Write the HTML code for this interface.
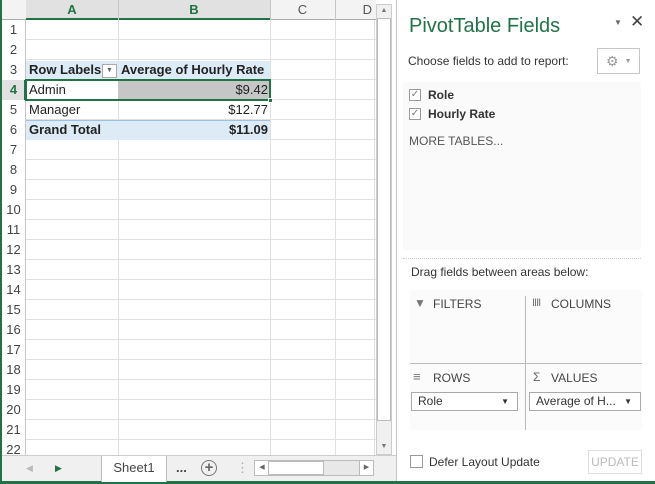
<!DOCTYPE html><html><head><style>
*{margin:0;padding:0;box-sizing:border-box}
body{width:655px;height:484px;position:relative;overflow:hidden;background:#fff;font-family:"Liberation Sans",Arial,sans-serif;font-size:13px;color:#222}
.a{position:absolute}
.rh{position:absolute;left:1px;width:25px;text-align:center;color:#444;font-size:13px;line-height:20px}
.hl{position:absolute;left:26px;width:350px;height:1px;background:#e0e0e0}
.vl{position:absolute;top:20px;height:435px;width:1px;background:#e0e0e0}
.t{position:absolute;line-height:20px;font-size:13px}
</style></head><body>
<div class="a" style="left:0;top:0;width:2px;height:484px;background:#217346"></div>
<div class="a" style="left:0;top:481px;width:655px;height:3px;background:#217346"></div>
<div class="a" style="left:2px;top:0;width:374px;height:20px;background:#f3f3f3;border-bottom:1px solid #ababab"></div>
<div class="a" style="left:26px;top:0;width:244px;height:20px;background:#e1e1e1;border-bottom:2px solid #217346"></div>
<div class="a" style="left:118px;top:0;width:1px;height:20px;background:#c6c6c6"></div>
<div class="a" style="left:270px;top:0;width:1px;height:20px;background:#c6c6c6"></div>
<div class="a" style="left:335px;top:0;width:1px;height:20px;background:#c6c6c6"></div>
<div class="t" style="left:26px;width:92px;top:0;text-align:center;color:#217346;font-weight:bold">A</div>
<div class="t" style="left:118px;width:152px;top:0;text-align:center;color:#217346;font-weight:bold">B</div>
<div class="t" style="left:270px;width:65px;top:0;text-align:center;color:#555">C</div>
<div class="t" style="left:335px;width:40px;top:0;text-align:right;padding-right:3px;color:#555">D</div>
<div class="a" style="left:2px;top:20px;width:24px;height:435px;background:#fff;border-right:1px solid #c6c6c6"></div>
<div class="a" style="left:2px;top:80px;width:24px;height:20px;background:#e1e1e1;border-right:2px solid #217346"></div>
<div id="rows"></div>
<div class="vl" style="left:118px"></div><div class="vl" style="left:270px"></div><div class="vl" style="left:335px"></div><div class="vl" style="left:374px"></div>
<div class="a" style="left:26px;top:61px;width:244px;height:19px;background:#ddebf7"></div>
<div class="a" style="left:26px;top:121px;width:244px;height:19px;background:#ddebf7"></div>
<div class="a" style="left:26px;top:79px;width:244px;height:1px;background:#9bc2e6"></div>
<div class="a" style="left:26px;top:120px;width:244px;height:1px;background:#9bc2e6"></div>
<div class="a" style="left:118px;top:81px;width:151px;height:18px;background:#c6c6c6"></div>
<div class="a" style="left:25px;top:79px;width:246px;height:22px;border:2px solid #217346"></div>
<div class="a" style="left:268px;top:98px;width:5px;height:5px;background:#217346;border:1px solid #fff"></div>
<div class="t" style="left:29px;top:60px;font-weight:bold">Row Labels</div>
<div class="a" style="left:102px;top:64px;width:15px;height:14px;border:1px solid #aaa;background:#fff;font-size:7px;color:#666;text-align:center;line-height:12px">▼</div>
<div class="t" style="left:121px;top:60px;font-weight:bold">Average of Hourly Rate</div>
<div class="t" style="left:29px;top:80px">Admin</div>
<div class="t" style="left:118px;width:150px;top:80px;text-align:right">$9.42</div>
<div class="t" style="left:29px;top:100px">Manager</div>
<div class="t" style="left:118px;width:150px;top:100px;text-align:right">$12.77</div>
<div class="t" style="left:29px;top:120px;font-weight:bold">Grand Total</div>
<div class="t" style="left:118px;width:150px;top:120px;text-align:right;font-weight:bold">$11.09</div>
<div class="a" style="left:376px;top:4px;width:16px;height:451px;background:#f0f0f0;border:1px solid #ccc"></div>
<div class="a" style="left:377px;top:18px;width:14px;height:403px;background:#fff;border:1px solid #bbb"></div>
<div class="a" style="left:377px;top:5px;width:14px;height:12px;font-size:7px;color:#777;text-align:center;line-height:12px">▲</div>
<div class="a" style="left:377px;top:441px;width:14px;height:12px;font-size:7px;color:#777;text-align:center;line-height:12px">▼</div>
<div class="a" style="left:2px;top:455px;width:394px;height:26px;background:#f0f0f0;border-top:1px solid #ccc"></div>
<div class="t" style="left:26px;top:458px;color:#bbb;font-size:9px">◀</div>
<div class="t" style="left:55px;top:458px;color:#217346;font-size:9px">▶</div>
<div class="a" style="left:101px;top:456px;width:66px;height:26px;background:#fff;border-left:1px solid #bbb;border-right:1px solid #bbb;text-align:center;line-height:24px;color:#444">Sheet1</div>
<div class="t" style="left:176px;top:458px;font-weight:bold;color:#444">...</div>
<div class="a" style="left:201px;top:460px;width:16px;height:16px;border:1.5px solid #777;border-radius:50%;text-align:center;line-height:13px;font-size:15px;color:#666;font-weight:bold">+</div>
<div class="t" style="left:236px;top:458px;color:#aaa">⋮</div>
<div class="a" style="left:254px;top:460px;width:120px;height:16px;background:#e8e8e8;border:1px solid #bbb"></div>
<div class="a" style="left:255px;top:461px;width:14px;height:14px;background:#fff;font-size:7px;color:#666;text-align:center;line-height:14px">◀</div>
<div class="a" style="left:268px;top:461px;width:56px;height:14px;background:#fff;border:1px solid #bbb"></div>
<div class="a" style="left:359px;top:461px;width:14px;height:14px;background:#fff;border-left:1px solid #bbb;font-size:7px;color:#666;text-align:center;line-height:14px">▶</div>
<div class="a" style="left:396px;top:0;width:1px;height:481px;background:#c6c6c6"></div>
<div class="a" style="left:409px;top:15px;font-size:20px;color:#217346">PivotTable Fields</div>
<div class="a" style="left:614px;top:18px;font-size:8px;color:#666">▼</div>
<div class="a" style="left:630px;top:12px;font-size:17px;color:#444">✕</div>
<div class="a" style="left:408px;top:54px;font-size:12px;color:#333">Choose fields to add to report:</div>
<div class="a" style="left:597px;top:48px;width:43px;height:26px;border:1px solid #c6c6c6;color:#999;font-size:14px;line-height:24px;padding-left:8px">⚙<span style="font-size:7px;margin-left:6px;vertical-align:middle">▼</span></div>
<div class="a" style="left:403px;top:82px;width:238px;height:168px;background:#fafafa"></div>
<div class="a" style="left:409px;top:89px;width:12px;height:12px;border:1px solid #999;background:#fff;font-size:10px;line-height:10px;color:#777;text-align:center">✓</div>
<div class="a" style="left:428px;top:88px;font-size:12px;font-weight:bold;color:#333">Role</div>
<div class="a" style="left:409px;top:108px;width:12px;height:12px;border:1px solid #999;background:#fff;font-size:10px;line-height:10px;color:#777;text-align:center">✓</div>
<div class="a" style="left:428px;top:107px;font-size:12px;font-weight:bold;color:#333">Hourly Rate</div>
<div class="a" style="left:409px;top:134px;font-size:12px;color:#555">MORE TABLES...</div>
<div class="a" style="left:403px;top:258px;width:238px;border-top:1px dotted #ccc"></div>
<div class="a" style="left:411px;top:265px;font-size:12px;color:#333">Drag fields between areas below:</div>
<div class="a" style="left:410px;top:290px;width:232px;height:140px;background:#fbfbfb"></div>
<div class="a" style="left:525px;top:296px;width:1px;height:134px;background:#bbb"></div>
<div class="a" style="left:410px;top:363px;width:232px;height:1px;background:#bbb"></div>
<div class="a" style="left:414px;top:296px;font-size:12px;color:#777">▼</div>
<div class="a" style="left:433px;top:297px;font-size:12px;color:#444">FILTERS</div>
<div class="a" style="left:532px;top:297px;font-size:11px;color:#777;letter-spacing:-1px">IIII</div>
<div class="a" style="left:551px;top:297px;font-size:12px;color:#444">COLUMNS</div>
<div class="a" style="left:413px;top:369px;font-size:13px;color:#777">≡</div>
<div class="a" style="left:433px;top:371px;font-size:12px;color:#444">ROWS</div>
<div class="a" style="left:533px;top:370px;font-size:12px;color:#666">Σ</div>
<div class="a" style="left:551px;top:371px;font-size:12px;color:#444">VALUES</div>
<div class="a" style="left:411px;top:392px;width:107px;height:19px;border:1px solid #aaa;background:#fff;font-size:12px;line-height:17px;padding-left:6px;color:#333">Role<span style="position:absolute;right:8px;font-size:8px">▼</span></div>
<div class="a" style="left:529px;top:392px;width:112px;height:19px;border:1px solid #aaa;background:#fff;font-size:12px;line-height:17px;padding-left:6px;color:#333">Average of H...<span style="position:absolute;right:8px;font-size:8px">▼</span></div>
<div class="a" style="left:410px;top:455px;width:13px;height:13px;border:1px solid #999;background:#fff"></div>
<div class="a" style="left:429px;top:455px;font-size:12px;color:#333">Defer Layout Update</div>
<div class="a" style="left:588px;top:450px;width:54px;height:24px;border:1px solid #ddd;font-size:12px;color:#bbb;text-align:center;line-height:22px">UPDATE</div>
<script>
var h='';for(var i=1;i<=22;i++){var t=20*i;h+='<div class="rh" style="top:'+t+'px;'+(i==4?'color:#217346;font-weight:bold':'')+'">'+i+'</div>';h+='<div class="hl" style="top:'+(t+19)+'px"></div>';}
document.getElementById('rows').outerHTML=h;
</script>
</body></html>
